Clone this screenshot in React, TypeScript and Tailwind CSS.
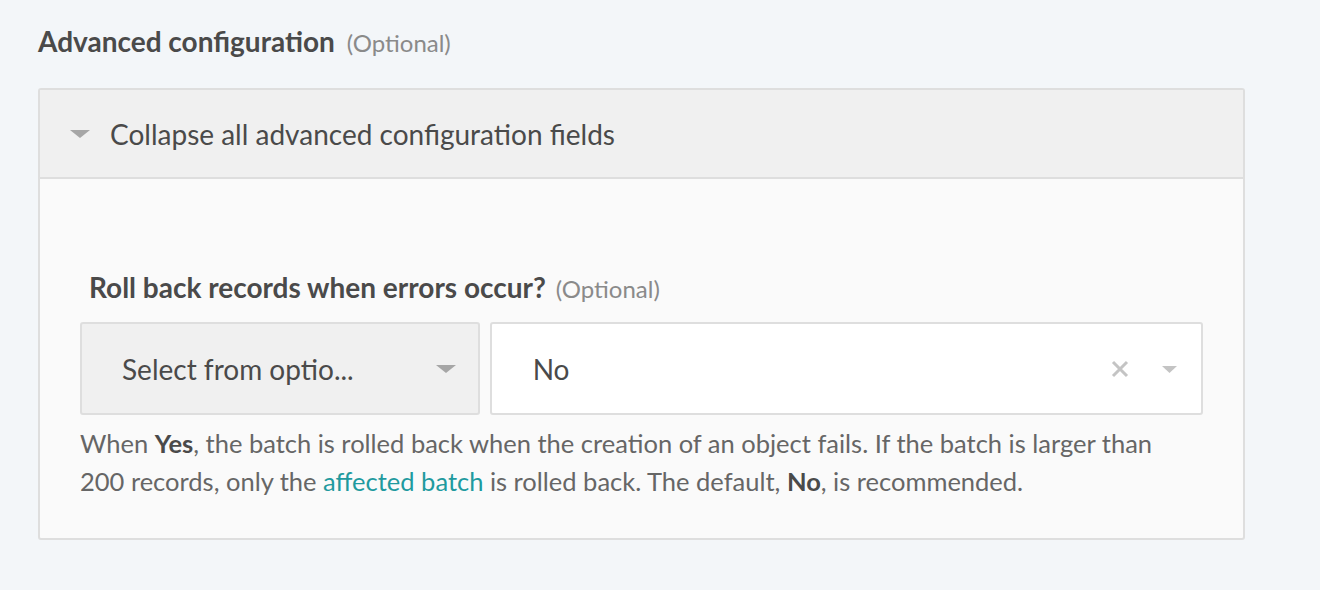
export default function App() {
  return (
    <div className="min-h-[590px] w-[1320px] bg-[#f3f6f9] pt-[24px] pl-[38px] font-['Lato',sans-serif] text-[#4a4a4a]">
      <div className="flex h-[34px] items-baseline gap-[12px] leading-[34px]">
        <h2 className="text-[28px] font-bold">Advanced configuration</h2>
        <span className="text-[24px] text-[#8a8a8a]">(Optional)</span>
      </div>

      <div className="mt-[30px] w-[1207px] rounded-[3px] border-2 border-[#dedede] bg-[#fafafa]">
        <div className="flex h-[89px] items-center border-b-2 border-[#dedede] bg-[#f0f0f0] pl-[30px]">
          <svg width="20" height="10" viewBox="0 0 20 10" className="mr-[20px]">
            <path d="M0 1h20L10 9z" fill="#a6a6a6" />
          </svg>
          <span className="text-[28px]">Collapse all advanced configuration fields</span>
        </div>

        <div className="px-[40px] pt-[91px] pb-[38px]">
          <div className="flex h-[34px] items-baseline gap-[10px] pl-[9px] leading-[34px]">
            <span className="text-[28px] font-bold">Roll back records when errors occur?</span>
            <span className="text-[24px] text-[#8a8a8a]">(Optional)</span>
          </div>

          <div className="mt-[18px] flex gap-[10px]">
            <div className="flex h-[93px] w-[400px] items-center justify-between rounded-[3px] border-2 border-[#dedede] bg-[#f0f0f0] pr-[22px] pl-[40px]">
              <span className="text-[28px]">Select from optio...</span>
              <svg width="20" height="10" viewBox="0 0 20 10">
                <path d="M0 1h20L10 9z" fill="#a6a6a6" />
              </svg>
            </div>
            <div className="flex h-[93px] w-[714px] items-center rounded-[3px] border-2 border-[#dedede] bg-white pr-[24px] pl-[41px]">
              <span className="flex-1 text-[28px]">No</span>
              <svg width="20" height="20" viewBox="0 0 20 20" className="mr-[32px]">
                <path d="M3 3l14 14M17 3L3 17" stroke="#c4c4c4" strokeWidth="3" />
              </svg>
              <svg width="15" height="8" viewBox="0 0 15 8">
                <path d="M0 1h15L7.5 8z" fill="#c4c4c4" />
              </svg>
            </div>
          </div>

          <p className="mt-[9px] text-[25.5px] leading-[38px] text-[#666]">
            When <b className="text-[#4a4a4a]">Yes</b>, the batch is rolled back when the creation of an object fails. If the batch is larger than
            <br />
            200 records, only the <a className="text-[#1f9a9f]">affected batch</a> is rolled back. The default,{" "}
            <b className="text-[#4a4a4a]">No</b>, is recommended.
          </p>
        </div>
      </div>
    </div>
  );
}
